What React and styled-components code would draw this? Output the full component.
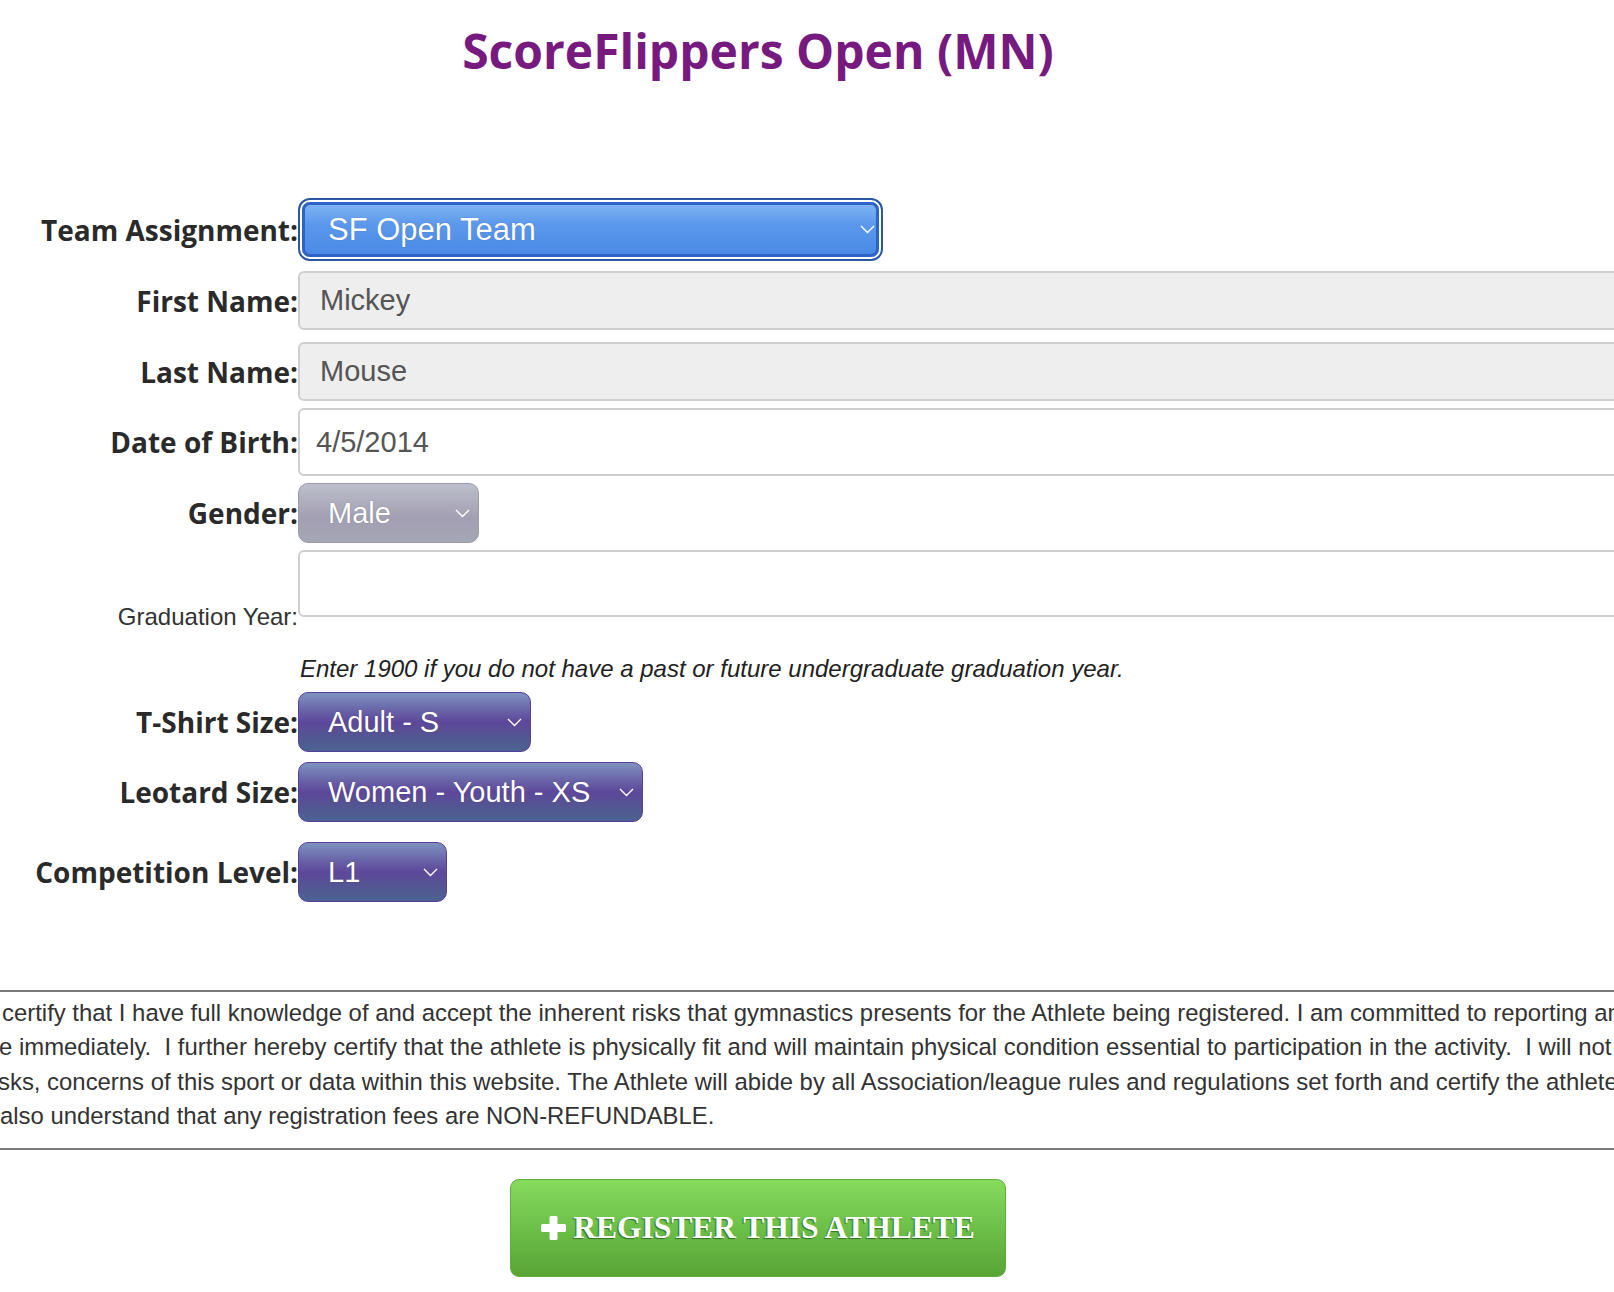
import styled, { createGlobalStyle, css } from "styled-components";

const LABEL_WIDTH = 298;

const GlobalStyle = createGlobalStyle`
  html, body {
    margin: 0;
    padding: 0;
    background: #fff;
    overflow: hidden;
  }
`;

const Chevron = () => (
  <svg width="15" height="9" viewBox="0 0 15 9" fill="none">
    <polyline points="1,1 7.5,7.5 14,1" stroke="#fff" strokeWidth="1.4" />
  </svg>
);

const PlusIcon = () => (
  <svg width="25" height="24" viewBox="0 0 25 24">
    <rect x="8.5" y="0" width="8" height="24" rx="1.5" fill="#fff" />
    <rect x="0" y="8" width="25" height="8" rx="1.5" fill="#fff" />
  </svg>
);

const tones = {
  blue: css`
    background: linear-gradient(to bottom, #7db3f3 0%, #5b98ec 40%, #4a8ae6 100%);
    border: 3px solid #2d63c6;
    border-radius: 8px;
    box-shadow: 0 0 0 2px #fff, 0 0 0 4px #2957a6;
  `,
  gray: css`
    background: linear-gradient(to bottom, #bbbfcb 0%, #a9a6b8 45%, #a39fb3 60%, #a3a7b3 100%);
    border: 1.5px solid #9d99ae;
    border-radius: 10px;
  `,
  purple: css`
    background: linear-gradient(
      to bottom,
      #7e93be 0%,
      #6a66a9 28%,
      #5e479b 50%,
      #545492 72%,
      #4a6391 100%
    );
    border: 1.5px solid #5b3d9c;
    border-radius: 10px;
  `,
};

const Page = styled.div`
  width: 1516px;
`;

const Title = styled.h1`
  margin: 0;
  padding-top: 17px;
  text-align: center;
  font: 700 48px/68px "Open Sans", sans-serif;
  color: #771a80;
`;

const Form = styled.div`
  margin-top: 117px;
  display: flex;
  flex-direction: column;
`;

const FieldRow = styled.div`
  display: flex;
  align-items: ${(p) => (p.$bottom ? "flex-end" : "center")};
  margin-top: ${(p) => p.$gap || 0}px;
`;

const Label = styled.label`
  flex: 0 0 ${LABEL_WIDTH}px;
  text-align: right;
  white-space: nowrap;
  font: 700 28px/38px "Open Sans", sans-serif;
  color: #2a2a2a;
  ${(p) =>
    p.$plain &&
    css`
      font: 400 24px/30px "Liberation Sans", Arial, sans-serif;
      color: #333;
      margin-bottom: -15px;
    `}
`;

const TextInput = styled.input`
  box-sizing: border-box;
  flex: 0 0 1400px;
  height: ${(p) => p.$height}px;
  padding: 0 0 0 ${(p) => p.$pad || 20}px;
  border: 2px solid #cfcfcf;
  border-radius: 6px;
  background: ${(p) => (p.$disabled ? "#eeeeee" : "#fff")};
  font: 400 29px "Liberation Sans", Arial, sans-serif;
  color: #555;
  outline: none;
`;

const Select = styled.div`
  box-sizing: border-box;
  display: flex;
  align-items: center;
  width: ${(p) => p.$width}px;
  height: ${(p) => p.$height || 60}px;
  margin-left: ${(p) => p.$offset || 0}px;
  padding: 0 ${(p) => p.$padRight || 8}px 0 ${(p) => p.$padLeft || 29}px;
  font: 400 ${(p) => p.$size || 29}px "Liberation Sans", Arial, sans-serif;
  color: #fff;
  text-shadow: 0 0 1px rgba(0, 0, 0, 0.35);
  ${(p) => tones[p.$tone]}
`;

const SelectText = styled.span`
  flex: 1;
  white-space: nowrap;
`;

const Note = styled.div`
  margin-top: ${(p) => p.$gap}px;
  padding-left: ${LABEL_WIDTH + 2}px;
  font: italic 400 24px/30px "Liberation Sans", Arial, sans-serif;
  color: #222;
`;

const Rule = styled.div`
  width: 100vw;
  height: 2px;
  background: #7a7a7a;
  margin-top: ${(p) => p.$gap || 0}px;
`;

const Disclaimer = styled.div`
  padding: 4px 0 14px;
  font: 400 23.9px/34.4px "Liberation Sans", Arial, sans-serif;
  color: #333;
`;

const DisclaimerLine = styled.div`
  white-space: pre;
  margin-left: ${(p) => p.$shift || 0}px;
`;

const ButtonRow = styled.div`
  display: flex;
  justify-content: center;
  margin-top: 29px;
`;

const RegisterButton = styled.button`
  box-sizing: border-box;
  display: flex;
  align-items: center;
  justify-content: center;
  gap: 7px;
  width: 496px;
  height: 98px;
  border: 1px solid #5fae3b;
  border-radius: 9px;
  background: linear-gradient(to bottom, #86da5d 0%, #6fc24b 45%, #58a435 100%);
  font: 700 31.5px "Liberation Serif", "Times New Roman", serif;
  color: #fff;
  text-shadow: -1px 1px 1px rgba(0, 50, 0, 0.55);
  cursor: pointer;
`;

const App = () => {
  return (
    <Page>
      <GlobalStyle />
      <Title>ScoreFlippers Open (MN)</Title>

      <Form>
        <FieldRow>
          <Label>Team Assignment:</Label>
          <Select
            $tone="blue"
            $width={577}
            $height={55}
            $offset={4}
            $padLeft={23}
            $padRight={1}
            $size={31}
          >
            <SelectText>SF Open Team</SelectText>
            <Chevron />
          </Select>
        </FieldRow>

        <FieldRow $gap={14}>
          <Label>First Name:</Label>
          <TextInput $height={59} $disabled readOnly defaultValue="Mickey" />
        </FieldRow>

        <FieldRow $gap={12}>
          <Label>Last Name:</Label>
          <TextInput $height={59} $disabled readOnly defaultValue="Mouse" />
        </FieldRow>

        <FieldRow $gap={7}>
          <Label>Date of Birth:</Label>
          <TextInput $height={68} $pad={16} readOnly defaultValue="4/5/2014" />
        </FieldRow>

        <FieldRow $gap={7}>
          <Label>Gender:</Label>
          <Select $tone="gray" $width={181}>
            <SelectText>Male</SelectText>
            <Chevron />
          </Select>
        </FieldRow>

        <FieldRow $gap={7} $bottom>
          <Label $plain>Graduation Year:</Label>
          <TextInput $height={67} readOnly defaultValue="" />
        </FieldRow>

        <Note $gap={37}>
          Enter 1900 if you do not have a past or future undergraduate graduation year.
        </Note>

        <FieldRow $gap={8}>
          <Label>T-Shirt Size:</Label>
          <Select $tone="purple" $width={233}>
            <SelectText>Adult - S</SelectText>
            <Chevron />
          </Select>
        </FieldRow>

        <FieldRow $gap={10}>
          <Label>Leotard Size:</Label>
          <Select $tone="purple" $width={345}>
            <SelectText>Women - Youth - XS</SelectText>
            <Chevron />
          </Select>
        </FieldRow>

        <FieldRow $gap={20}>
          <Label>Competition Level:</Label>
          <Select $tone="purple" $width={149}>
            <SelectText>L1</SelectText>
            <Chevron />
          </Select>
        </FieldRow>
      </Form>

      <Rule $gap={88} />
      <Disclaimer>
        <DisclaimerLine $shift={2}>
          certify that I have full knowledge of and accept the inherent risks that gymnastics presents for the Athlete being registered. I am committed to reporting any
        </DisclaimerLine>
        <DisclaimerLine $shift={-1}>
          {"e immediately.  I further hereby certify that the athlete is physically fit and will maintain physical condition essential to participation in the activity.  I will not"}
        </DisclaimerLine>
        <DisclaimerLine $shift={-2}>
          sks, concerns of this sport or data within this website. The Athlete will abide by all Association/league rules and regulations set forth and certify the athlete
        </DisclaimerLine>
        <DisclaimerLine>also understand that any registration fees are NON-REFUNDABLE.</DisclaimerLine>
      </Disclaimer>
      <Rule />

      <ButtonRow>
        <RegisterButton>
          <PlusIcon />
          REGISTER THIS ATHLETE
        </RegisterButton>
      </ButtonRow>
    </Page>
  );
};

export default App;
